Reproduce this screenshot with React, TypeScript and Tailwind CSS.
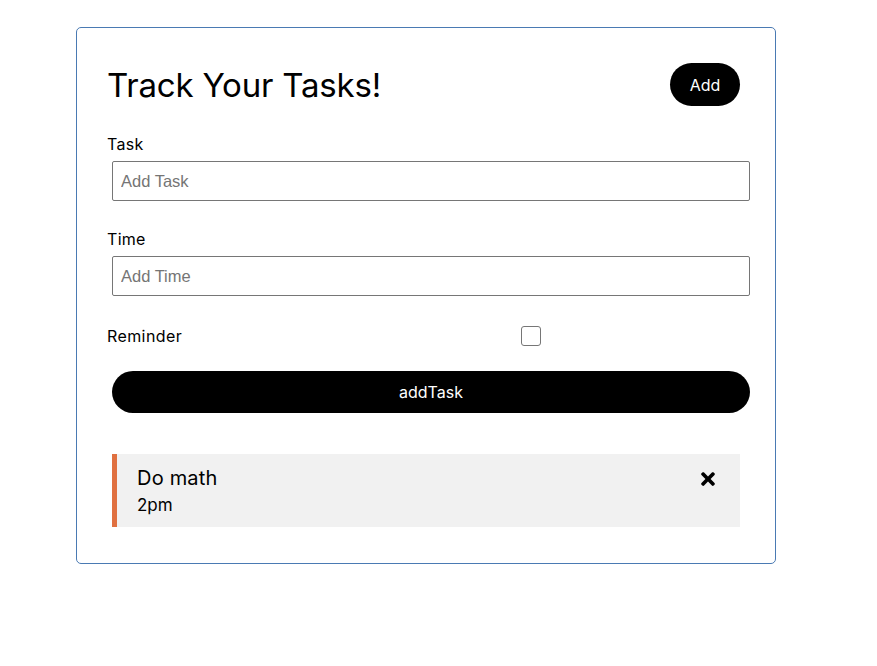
import React from "react";
import { FaTimes } from "react-icons/fa";

export default function App() {
  const font = { fontFamily: "Inter, 'Noto Sans', sans-serif" };
  const inputFont = { fontFamily: "'Liberation Sans', Arial, sans-serif" };
  return (
    <div className="min-h-[666px] w-[877px] bg-white pl-[76px] pt-[27px] text-black" style={font}>
      <div className="w-[700px] h-[537px] border border-[#4a7ab3] rounded-[5px] px-[30px] pt-[30px]">
        <div className="flex items-center justify-between h-[53px] mb-[21px]">
          <h1 className="text-[33px] leading-none font-normal tracking-[-0.2px] mt-[2px]">Track Your Tasks!</h1>
          <button className="mr-[5px] w-[70px] h-[43px] rounded-full bg-black text-white text-[16px]">Add</button>
        </div>
        <div className="flex flex-col">
          <label className="text-[16px] leading-[24px] tracking-[0.3px]">Task</label>
          <input
            className="ml-[5px] mt-[5px] w-[638px] h-[40px] border border-[#767676] rounded-[2px] px-[8px] text-[16.5px] placeholder:text-[#757575]"
            style={inputFont}
            placeholder="Add Task"
          />
          <label className="mt-[26px] text-[16px] leading-[24px] tracking-[0.3px]">Time</label>
          <input
            className="ml-[5px] mt-[5px] w-[638px] h-[40px] border border-[#767676] rounded-[2px] px-[8px] text-[16.5px] placeholder:text-[#757575]"
            style={inputFont}
            placeholder="Add Time"
          />
          <div className="mt-[25px] flex items-center h-[30px]">
            <span className="text-[16px] w-[414px] tracking-[0.4px]">Reminder</span>
            <span className="w-[20px] h-[20px] rounded-[3px] border border-[#767676] bg-white" />
          </div>
          <button className="mt-[20px] ml-[5px] w-[638px] h-[42px] rounded-full bg-black text-white text-[16px]">addTask</button>
          <div className="mt-[41px] ml-[5px] w-[628px] h-[73px] bg-[#f1f1f1] border-l-[5px] border-[#e07040] pl-[20px] pr-[22px] pt-[12px] flex flex-col">
            <div className="flex items-center justify-between">
              <span className="text-[20px] leading-[24px] tracking-[0.2px]">Do math</span>
              <FaTimes className="text-[20px] mt-[2px]" />
            </div>
            <span className="text-[17px] leading-[24px] mt-[3px]">2pm</span>
          </div>
        </div>
      </div>
    </div>
  );
}
